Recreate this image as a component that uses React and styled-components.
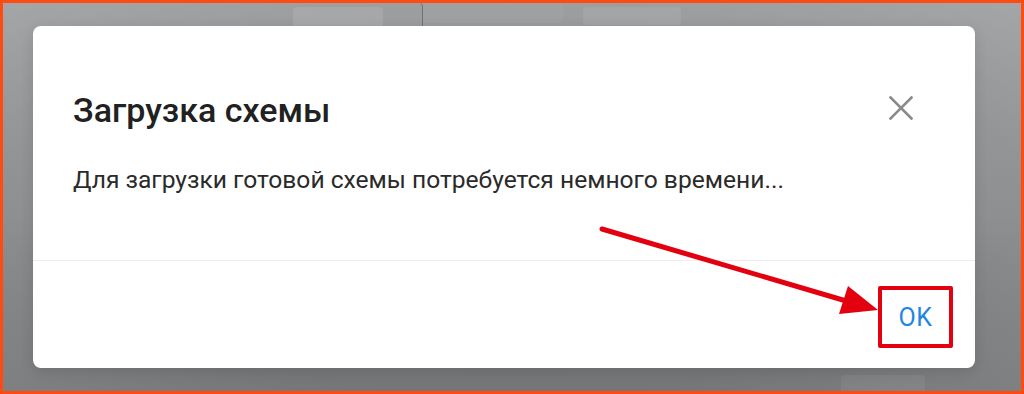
import React from "react";
import styled, { createGlobalStyle } from "styled-components";

const GlobalStyle = createGlobalStyle`
  html, body {
    margin: 0;
    padding: 0;
    width: 1024px;
    height: 394px;
    overflow: hidden;
    font-family: Roboto, "Liberation Sans", sans-serif;
  }
`;

const Frame = styled.div`
  box-sizing: border-box;
  width: 1024px;
  height: 394px;
  border: 3px solid #ff4a12;
  position: relative;
  overflow: hidden;
  background: linear-gradient(180deg, #9d9ea0 0%, #8e8f91 55%, #747577 100%);
`;

const Backdrop = styled.div`
  box-sizing: border-box;
  height: 100%;
  padding: 23px 46px 23px 30px;
  display: flex;
  background: radial-gradient(
    ellipse at 50% 50%,
    rgba(0, 0, 0, 0.06) 0%,
    rgba(0, 0, 0, 0) 70%,
    rgba(255, 255, 255, 0.08) 100%
  );
`;

const Ghost = styled.div`
  position: absolute;
  top: ${(p) => p.top}px;
  left: ${(p) => p.left}px;
  width: ${(p) => p.w}px;
  height: ${(p) => p.h}px;
  border-radius: 4px;
  background: ${(p) => p.bg || "rgba(255,255,255,0.06)"};
  border-right: ${(p) => (p.line ? "1px solid #6f7072" : "none")};
  box-sizing: border-box;
`;

const Modal = styled.div`
  flex: 1;
  background: #fff;
  border-radius: 8px;
  display: flex;
  flex-direction: column;
  box-shadow: 0 4px 14px rgba(0, 0, 0, 0.12);
  position: relative;
  z-index: 1;
`;

const Header = styled.div`
  display: flex;
  align-items: flex-start;
  justify-content: space-between;
  padding: 62px 62px 0 40px;
`;

const Title = styled.h2`
  margin: 0;
  font-size: 34px;
  line-height: 44px;
  font-weight: 500;
  color: #212121;
`;

const Close = styled.button`
  border: none;
  background: none;
  padding: 0;
  margin-top: 8px;
  width: 24px;
  height: 24px;
  display: flex;
  align-items: center;
  justify-content: center;
  cursor: pointer;
`;

const Body = styled.p`
  margin: 0;
  padding: 32px 40px 0 40px;
  font-size: 24.6px;
  line-height: 32px;
  color: #2a2a2a;
  flex: 1;
`;

const Footer = styled.div`
  border-top: 1px solid #ececec;
  height: 108px;
  box-sizing: border-box;
  display: flex;
  justify-content: flex-end;
  align-items: flex-start;
  padding: 25px 22px 0 0;
`;

const OkButton = styled.button`
  box-sizing: border-box;
  width: 75px;
  height: 62px;
  border: 4px solid #e3000f;
  border-radius: 2px;
  background: #fff;
  color: #1f86e6;
  font-family: Roboto, "Liberation Sans", sans-serif;
  font-size: 25px;
  font-weight: 400;
  letter-spacing: 0.5px;
  cursor: pointer;
  padding: 0;
`;

const Arrow = styled.svg`
  position: absolute;
  left: 0;
  top: 0;
  width: 1024px;
  height: 394px;
  pointer-events: none;
  z-index: 2;
`;

export default function App() {
  return (
    <>
      <GlobalStyle />
      <Frame>
        <Ghost top={4} left={290} w={90} h={24} bg="rgba(255,255,255,0.1)" />
        <Ghost top={0} left={380} w={40} h={26} line bg="transparent" />
        <Ghost top={0} left={420} w={140} h={20} bg="rgba(255,255,255,0.04)" />
        <Ghost top={4} left={580} w={98} h={18} bg="rgba(255,255,255,0.08)" />
        <Ghost top={372} left={838} w={84} h={20} bg="rgba(255,255,255,0.06)" />
        <Backdrop>
          <Modal>
            <Header>
              <Title>Загрузка схемы</Title>
              <Close aria-label="Закрыть">
                <svg width="24" height="24" viewBox="0 0 24 24">
                  <path
                    d="M1.5 1.5 L22.5 22.5 M22.5 1.5 L1.5 22.5"
                    stroke="#8a8a8a"
                    strokeWidth="2.6"
                    strokeLinecap="square"
                  />
                </svg>
              </Close>
            </Header>
            <Body>Для загрузки готовой схемы потребуется немного времени...</Body>
            <Footer>
              <OkButton>OK</OkButton>
            </Footer>
          </Modal>
        </Backdrop>
        <Arrow viewBox="0 0 1024 394">
          <line
            x1="599"
            y1="226"
            x2="850"
            y2="300"
            stroke="#e3000f"
            strokeWidth="5"
            strokeLinecap="round"
          />
          <polygon points="875,307 845,283 836,311" fill="#e3000f" />
        </Arrow>
      </Frame>
    </>
  );
}
